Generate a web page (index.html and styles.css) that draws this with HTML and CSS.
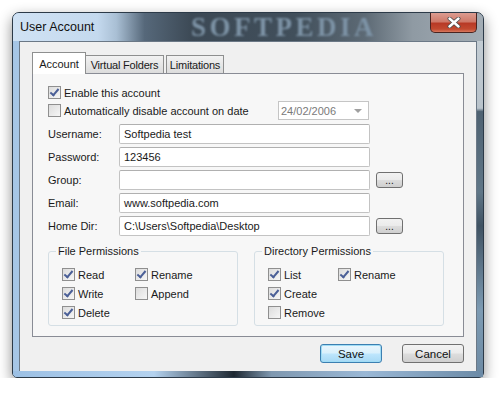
FILE: index.html
```html
<!DOCTYPE html>
<html lang="en">
<head>
  <meta charset="UTF-8" />
  <title>User Account</title>
  <link rel="stylesheet" href="styles.css">
</head>
<body>
  <div class="window">
    <div class="titlebar">
      <span class="title">User Account</span>
      <span class="watermark">SOFTPEDIA</span>
      <button class="close-btn">
        <svg width="14" height="11" viewBox="0 0 14 11"><path d="M2.5 1.5 L11.5 9.5 M11.5 1.5 L2.5 9.5" stroke="#4a4a4a" stroke-width="4" stroke-linecap="round"/><path d="M2.5 1.5 L11.5 9.5 M11.5 1.5 L2.5 9.5" stroke="#fff" stroke-width="2.4" stroke-linecap="round"/></svg>
      </button>
    </div>
    <div class="client">
      <div class="tabs">
        <div class="tab active">Account</div>
        <div class="tab vf">Virtual Folders</div>
        <div class="tab lim">Limitations</div>
      </div>
      <div class="panel">
        <label class="check-row"><span class="cb checked"></span>Enable this account</label>
        <div class="date-row">
          <label class="check-row"><span class="cb"></span>Automatically disable account on date</label>
          <div class="date-field">24/02/2006<span class="arrow"></span></div>
        </div>
        <div class="fields">
          <div class="field"><span class="lbl">Username:</span><div class="input">Softpedia test</div></div>
          <div class="field"><span class="lbl">Password:</span><div class="input">123456</div></div>
          <div class="field"><span class="lbl">Group:</span><div class="input"></div><button class="btn small">...</button></div>
          <div class="field"><span class="lbl">Email:</span><div class="input">www.softpedia.com</div></div>
          <div class="field"><span class="lbl">Home Dir:</span><div class="input">C:\Users\Softpedia\Desktop</div><button class="btn small">...</button></div>
        </div>
        <div class="groups">
          <fieldset class="group">
            <legend>File Permissions</legend>
            <div class="perm-grid">
              <label class="check-row"><span class="cb checked"></span>Read</label>
              <label class="check-row"><span class="cb checked"></span>Rename</label>
              <label class="check-row"><span class="cb checked"></span>Write</label>
              <label class="check-row"><span class="cb"></span>Append</label>
              <label class="check-row"><span class="cb checked"></span>Delete</label>
            </div>
          </fieldset>
          <fieldset class="group">
            <legend>Directory Permissions</legend>
            <div class="perm-grid dir">
              <label class="check-row"><span class="cb checked"></span>List</label>
              <label class="check-row"><span class="cb checked"></span>Rename</label>
              <label class="check-row"><span class="cb checked"></span>Create</label>
              <span></span>
              <label class="check-row"><span class="cb"></span>Remove</label>
            </div>
          </fieldset>
        </div>
      </div>
      <div class="footer">
        <button class="btn default">Save</button>
        <button class="btn">Cancel</button>
      </div>
    </div>
  </div>
</body>
</html>
```

FILE: styles.css
```css
body {
  margin: 0;
  background: #fff;
  font-family: 'Liberation Sans', Arial, sans-serif;
  font-size: 11px;
  color: #1a1a1a;
}
.window {
  margin: 12px 0 0 12px;
  width: 472px;
  height: 366px;
  box-sizing: border-box;
  border: 1px solid #2c3a48;
  border-radius: 7px 7px 5px 5px;
  background: linear-gradient(90deg, #a6c6e6 0%, #b3d0ee 50%, #7d92a6 100%);
  box-shadow: 0 5px 14px rgba(0,0,0,0.45);
  padding: 0 6px 5px 6px;
  display: flex;
  flex-direction: column;
  position: relative;
}
/* right frame edge */
.window::before {
  content: "";
  position: absolute;
  right: 0;
  top: 28px;
  bottom: 0;
  width: 6px;
  background: linear-gradient(180deg, #c3ccd3 0%, #b9c3cb 20%, #4f6272 21%, #5f7687 45%, #3f5262 55%, #7d9bb3 80%, #6d8aa3 100%);
}
/* bottom frame edge */
.window::after {
  content: "";
  position: absolute;
  left: 0; right: 0; bottom: 0;
  height: 6px;
  border-radius: 0 0 4px 4px;
  background: linear-gradient(90deg, #9cc0e4 0%, #b4d2ef 30%, #1d2731 47%, #7f98b0 55%, #9ab8d6 75%, #6b8aa6 100%);
}
.titlebar {
  height: 28px;
  display: flex;
  align-items: center;
  position: relative;
  overflow: hidden;
  background: linear-gradient(90deg, #d0e2f4 0%, #c4d9ee 18%, #a9bfd4 22%, #56687a 28%, #3c4955 38%, #414f5b 60%, #5d6a75 75%, #8f9aa3 85%, #a3adb5 100%);
  margin: 0 -6px;
  padding: 0 7px;
  border-radius: 6px 6px 0 0;
}
.title {
  font-size: 12.5px;
  color: #111;
  position: relative;
  z-index: 1;
}
.watermark {
  position: absolute;
  left: 178px;
  top: 1px;
  font-family: 'Liberation Serif', serif;
  font-weight: bold;
  font-size: 27px;
  line-height: 26px;
  letter-spacing: 3.5px;
  color: #7d93a6;
  filter: blur(1.3px);
}
.close-btn {
  position: absolute;
  right: 6px;
  top: 0;
  width: 47px;
  height: 20px;
  border: 1px solid #4a2420;
  border-top: none;
  border-radius: 0 0 5px 5px;
  background: linear-gradient(180deg, #dc9c90 0%, #cf7a6a 45%, #b83a26 55%, #c24a30 85%, #d87a60 100%);
  display: flex;
  align-items: center;
  justify-content: center;
  padding: 0;
}
.client {
  flex: 1;
  background: #f0f0f0;
  border: 1px solid #6b7886;
  display: flex;
  flex-direction: column;
  padding: 10px 12px 0 12px;
}
.tabs {
  display: flex;
  align-items: flex-end;
  height: 21px;
}
.tab {
  height: 18px;
  box-sizing: border-box;
  border: 1px solid #8e8f8f;
  border-bottom: none;
  display: flex;
  align-items: center;
  justify-content: center;
  letter-spacing: -0.2px;
  background: linear-gradient(180deg, #f2f2f2, #dcdcdc);
}
.tab.active {
  width: 54px;
  height: 22px;
  background: #fff;
  position: relative;
  z-index: 1;
  margin-bottom: -1px;
  letter-spacing: 0;
}
.tab.vf {
  width: 79px;
  margin-left: -1px;
}
.tab.lim {
  width: 58px;
  margin-left: 2px;
}
.panel {
  width: 432px;
  height: 264px;
  box-sizing: border-box;
  border: 1px solid #898c95;
  background: #f7f7f7;
  padding: 10px 0 0 15px;
  display: flex;
  flex-direction: column;
}
.check-row {
  display: flex;
  align-items: center;
  gap: 3px;
  height: 17px;
}
.cb {
  width: 11px;
  height: 11px;
  border: 1px solid #8f8f8f;
  background: linear-gradient(135deg, #dcdcdc, #f6f6f6);
  position: relative;
  flex: none;
}
.cb.checked::after {
  content: "";
  position: absolute;
  left: 3px;
  top: 0px;
  width: 3px;
  height: 7px;
  border: solid #4a5f97;
  border-width: 0 2px 2px 0;
  transform: rotate(40deg);
}
.date-row {
  display: flex;
  align-items: center;
  justify-content: space-between;
  width: 321px;
  height: 19px;
}
.date-field {
  width: 91px;
  height: 19px;
  box-sizing: border-box;
  border: 1px solid #c5c5c5;
  background: #fff;
  color: #7a7a7a;
  display: flex;
  align-items: center;
  padding-left: 2px;
  position: relative;
}
.arrow {
  position: absolute;
  right: 6px;
  top: 7px;
  border: 4px solid transparent;
  border-top: 4px solid #a0a0a0;
  border-bottom: none;
}
.fields {
  display: flex;
  flex-direction: column;
  gap: 3px;
  margin-top: 4px;
}
.field {
  display: flex;
  align-items: center;
  height: 20px;
}
.lbl {
  width: 71px;
}
.input {
  width: 251px;
  height: 20px;
  box-sizing: border-box;
  border: 1px solid #c3c3c3;
  border-top-color: #b0b0b0;
  border-radius: 2px;
  background: #fff;
  display: flex;
  align-items: center;
  padding-left: 4px;
}
.btn {
  font-family: inherit;
  font-size: 11.5px;
  color: #111;
  border: 1px solid #707070;
  border-radius: 3px;
  background: linear-gradient(180deg, #f2f2f2 0%, #ebebeb 48%, #dddddd 52%, #cfcfcf 100%);
  padding: 0;
}
.btn.small {
  width: 27px;
  height: 16px;
  margin-left: 6px;
  font-size: 10px;
  line-height: 10px;
  padding-top: 2px;
}
.groups {
  display: flex;
  gap: 16px;
  margin-top: 9px;
}
.group {
  width: 190px;
  height: 81px;
  box-sizing: border-box;
  margin: 0;
  border: 1px solid #d5dfe5;
  border-radius: 3px;
  padding: 9px 0 0 13px;
}
.group legend {
  padding: 0 2px;
  margin-left: -6px;
}
.perm-grid {
  display: grid;
  grid-template-columns: 73px auto;
  row-gap: 2px;
}
.perm-grid.dir {
  grid-template-columns: 70px auto;
}
.footer {
  display: flex;
  justify-content: flex-end;
  gap: 20px;
  padding: 7px 0 0 0;
}
.footer .btn {
  width: 62px;
  height: 19px;
}
.btn.default {
  border-color: #3c7fb1;
  box-shadow: inset 0 0 0 1px #9fdcf5;
  background: linear-gradient(180deg, #eaf6fd 0%, #d9f0fc 48%, #bee6fd 52%, #a7d9f5 100%);
}
```
